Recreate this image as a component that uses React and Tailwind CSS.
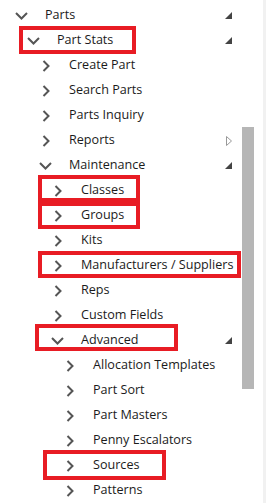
import React from "react";

// tree rows: level, expanded state, triangle marker on the right, annotation box
const rows = [
  { label: "Parts", level: 0, open: true, mark: "solid" },
  { label: "Part Stats", level: 1, open: true, mark: "solid", box: "left-[19px] w-[117px] top-[-2px] h-[28px]" },
  { label: "Create Part", level: 2 },
  { label: "Search Parts", level: 2 },
  { label: "Parts Inquiry", level: 2 },
  { label: "Reports", level: 2, mark: "outline" },
  { label: "Maintenance", level: 2, open: true, mark: "solid" },
  { label: "Classes", level: 3, box: "left-[38px] w-[102px] top-[-3px] h-[27px]" },
  { label: "Groups", level: 3, box: "left-[38px] w-[102px] top-[-1px] h-[27px]" },
  { label: "Kits", level: 3 },
  { label: "Manufacturers / Suppliers", level: 3, box: "left-[38px] w-[203px] top-[-2px] h-[27px]" },
  { label: "Reps", level: 3 },
  { label: "Custom Fields", level: 3 },
  { label: "Advanced", level: 3, open: true, mark: "solid", box: "left-[35px] w-[143px] top-[-4px] h-[27px]" },
  { label: "Allocation Templates", level: 4 },
  { label: "Part Sort", level: 4 },
  { label: "Part Masters", level: 4 },
  { label: "Penny Escalators", level: 4 },
  { label: "Sources", level: 4, box: "left-[43px] w-[123px] top-[-3px] h-[30px]" },
  { label: "Patterns", level: 4 },
];

const indents = ["pl-[15px]", "pl-[27px]", "pl-[39px]", "pl-[51px]", "pl-[63px]"];

const ChevronDown = () => (
  <svg width="13" height="8" viewBox="0 0 13 8" fill="none">
    <polyline points="1,1 6.5,6.5 12,1" stroke="#555" strokeWidth="2" />
  </svg>
);

const ChevronRight = () => (
  <svg width="8" height="12" viewBox="0 0 8 12" fill="none">
    <polyline points="1.5,1 6.5,6 1.5,11" stroke="#555" strokeWidth="2" />
  </svg>
);

const Marker = ({ type }) => {
  if (type === "solid") {
    return (
      <svg width="7" height="7" viewBox="0 0 7 7">
        <polygon points="7,0 7,7 0,7" fill="#444" />
      </svg>
    );
  }
  if (type === "outline") {
    return (
      <svg width="6" height="10" viewBox="0 0 6 10" fill="none">
        <polygon points="0.5,0.5 5.5,5 0.5,9.5" stroke="#999" strokeWidth="1" />
      </svg>
    );
  }
  return null;
};

const TreeRow = ({ row }) => (
  <div className={`relative h-[25px] flex items-center ${indents[row.level]}`}>
    <div className="w-[13px] h-full flex items-center justify-center shrink-0">
      {row.open ? <ChevronDown /> : <ChevronRight />}
    </div>
    <span className="ml-[17px] flex-1 text-[12.6px] text-[#1b1b1b] whitespace-nowrap">
      {row.label}
    </span>
    <div className="w-[8px] mr-[10px] flex items-center justify-end">
      <Marker type={row.mark} />
    </div>
    {row.box && (
      <div className={`absolute border-[4px] border-[#e81c24] pointer-events-none ${row.box}`} />
    )}
  </div>
);

export default function App() {
  return (
    <div
      className="w-[266px] h-[503px] bg-white flex overflow-hidden"
      style={{ fontFamily: '"Open Sans", "Noto Sans", sans-serif' }}
    >
      <div className="w-[242px] pt-[3px] flex flex-col">
        {rows.map((row) => (
          <TreeRow key={row.label} row={row} />
        ))}
      </div>
      <div className="w-[12px]">
        <div className="mt-[127px] h-[262px] bg-[#b6b6b6]" />
      </div>
      <div className="flex-1" />
      <div className="w-[3px] bg-[#f1f1f1]" />
    </div>
  );
}
